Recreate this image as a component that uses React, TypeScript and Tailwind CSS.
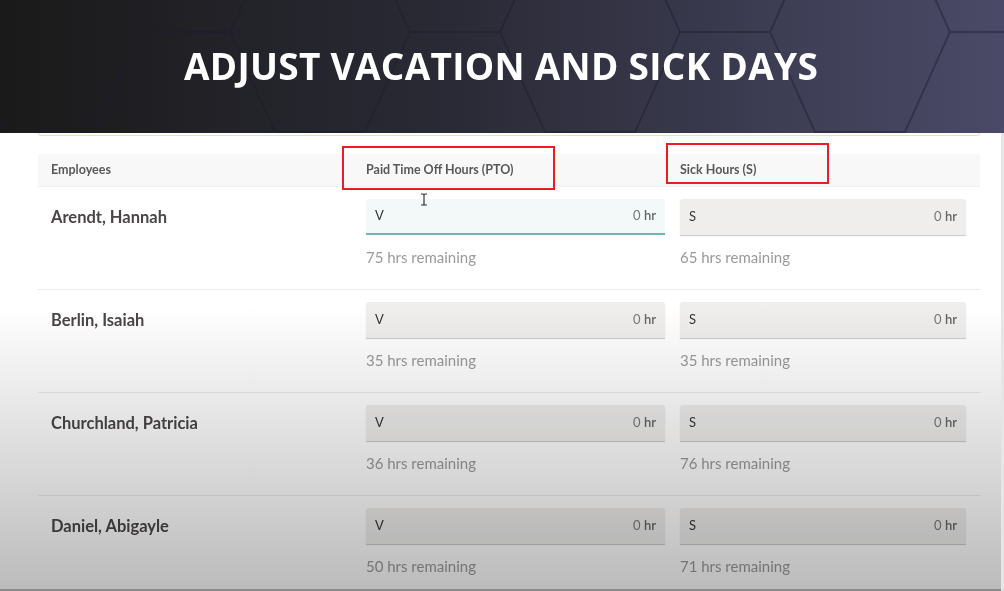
import React from 'react';

type Row = { name: string; pto: number; sick: number; focused?: boolean };

const rows: Row[] = [
  { name: 'Arendt, Hannah', pto: 75, sick: 65, focused: true },
  { name: 'Berlin, Isaiah', pto: 35, sick: 35 },
  { name: 'Churchland, Patricia', pto: 36, sick: 76 },
  { name: 'Daniel, Abigayle', pto: 50, sick: 71 },
];

function HexPattern() {
  return (
    <svg className="absolute inset-0 h-full w-full" width="1004" height="133">
      <defs>
        <pattern id="hex" width="270" height="200" patternUnits="userSpaceOnUse" x="-40" y="-68">
          <path
            d="M45 0 L135 0 L180 100 L135 200 L45 200 L0 100 Z M180 100 L270 100 M135 0 L180 -100 M135 200 L180 300"
            fill="none"
            stroke="#1a1a2e"
            strokeOpacity="0.45"
            strokeWidth="2"
          />
        </pattern>
      </defs>
      <rect width="1004" height="133" fill="url(#hex)" />
    </svg>
  );
}

function HoursInput({ letter, focused }: { letter: string; focused?: boolean }) {
  return (
    <div
      className={
        focused
          ? 'flex h-9 items-center justify-between rounded-t-[3px] border-b-2 border-[#6fb6b1] bg-[#f3f8f8] px-[9px] text-[13px]'
          : 'flex h-9 items-center justify-between rounded-t-[3px] bg-[#efeeed] px-[9px] text-[13px] shadow-[0_1px_1px_rgba(0,0,0,0.22)]'
      }
    >
      <span className="text-[#333]">{letter}</span>
      <span>
        <span className="text-[#777]">0</span> <span className="font-semibold text-[#666]">hr</span>
      </span>
    </div>
  );
}

export default function App() {
  return (
    <div
      className="relative h-[591px] w-[1004px] overflow-hidden bg-white"
      style={{ fontFamily: 'Lato, "Noto Sans", sans-serif' }}
    >
      <header className="relative flex h-[133px] items-center justify-center bg-[linear-gradient(to_right,#1a1a1a_0%,#2a2a36_45%,#4a4a68_100%)]">
        <HexPattern />
        <h1
          className="relative ml-[-2px] mt-[-2px] text-[37px] font-bold tracking-[0.3px] text-white"
          style={{ fontFamily: '"Open Sans", sans-serif' }}
        >
          ADJUST VACATION AND SICK DAYS
        </h1>
      </header>

      <div className="relative h-[458px] border-r-[3px] border-[#e6e6e6]">
        <div className="ml-[38px] mr-[21px] h-[3px] rounded-b-[3px] border-x border-b border-[#f1ddb0]" />

        <div className="ml-[38px] mr-[21px] mt-[18px]">
          <div className="grid h-[32px] grid-cols-[328px_314px_1fr] items-center bg-[#f8f8f8] text-[12.5px] font-bold text-[#585858]">
            <div className="pl-[13px]">Employees</div>
            <div className="relative">
              Paid Time Off Hours (PTO)
              <div className="pointer-events-none absolute left-[-24px] top-[-15px] h-[44px] w-[213px] border-2 border-[#ec1c24]" />
            </div>
            <div className="relative">
              Sick Hours (S)
              <div className="pointer-events-none absolute left-[-14px] top-[-18px] h-[41px] w-[163px] border-2 border-[#ec1c24]" />
            </div>
          </div>

          {rows.map((r, i) => (
            <div
              key={r.name}
              className={
                i === 0
                  ? 'grid h-[103px] grid-cols-[328px_314px_1fr] border-t border-[#f0f0f0] pt-[12px]'
                  : 'grid h-[103px] grid-cols-[328px_314px_1fr] border-t border-[#ebebeb] pt-[12px]'
              }
            >
              <div className="pl-[13px] pt-[6px] text-[16.5px] font-bold text-[#4a4646]">{r.name}</div>
              <div className="pr-[15px]">
                <div className="relative">
                  <HoursInput letter="V" focused={r.focused} />
                  {r.focused && (
                    <svg className="absolute left-[54px] top-[-6px]" width="8" height="13" viewBox="0 0 8 13">
                      <path d="M1 1 H3 Q4 1 4 2 V11 Q4 12 3 12 H1 M7 1 H5 Q4 1 4 2 M4 11 Q4 12 5 12 H7" fill="none" stroke="#333" strokeWidth="1.2" />
                    </svg>
                  )}
                </div>
                <div className="mt-[11px] text-[15px] text-[#9a9a9a]">{r.pto} hrs remaining</div>
              </div>
              <div className="pr-[14px]">
                <HoursInput letter="S" />
                <div className="mt-[11px] text-[15px] text-[#9a9a9a]">{r.sick} hrs remaining</div>
              </div>
            </div>
          ))}
        </div>

        <div className="pointer-events-none absolute inset-0 bg-[linear-gradient(to_bottom,#ffffff_0%,#ffffff_38%,#bbbbbb_100%)] mix-blend-multiply" />
        <div className="absolute bottom-0 left-0 right-0 h-[2px] bg-[#8a8a8a]" />
      </div>
    </div>
  );
}
